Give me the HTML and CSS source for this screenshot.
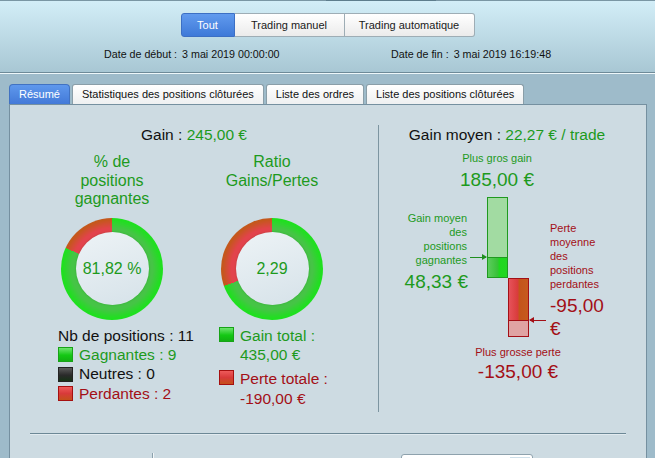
FILE: index.html
```html
<!DOCTYPE html>
<html lang="fr">
<head>
    <meta charset="UTF-8">
    <meta name="viewport" content="width=device-width, initial-scale=1.0">
    <title>Statistiques de trading</title>
    <link rel="stylesheet" href="styles.css">
</head>
<body>
    <div class="header">
        <div class="top-edge"><span></span></div>
        <div class="mode-switch">
            <button class="mode mode-all active">Tout</button>
            <button class="mode mode-manual">Trading manuel</button>
            <button class="mode mode-auto">Trading automatique</button>
        </div>
        <div class="dates">
            <span class="date-start">Date de début :<span class="date-value">3 mai 2019 00:00:00</span></span>
            <span class="date-end">Date de fin :<span class="date-value">3 mai 2019 16:19:48</span></span>
        </div>
    </div>

    <div class="tabs">
        <div class="tab active">Résumé</div>
        <div class="tab">Statistiques des positions clôturées</div>
        <div class="tab">Liste des ordres</div>
        <div class="tab">Liste des positions clôturées</div>
    </div>

    <div class="panel">
        <div class="summary">
            <div class="overview">
                <div class="headline">Gain : <span class="pos">245,00 €</span></div>
                <div class="ratio-cols">
                    <div class="ratio-col">
                        <div class="ratio-title">% de<br>positions<br>gagnantes</div>
                        <div class="donut" style="--split: 294.5deg">
                            <div class="donut-hole">81,82 %</div>
                        </div>
                        <div class="legend">
                            <div class="legend-row">Nb de positions : 11</div>
                            <div class="legend-row pos"><span class="swatch win"></span>Gagnantes : 9</div>
                            <div class="legend-row"><span class="swatch flat"></span>Neutres : 0</div>
                            <div class="legend-row neg"><span class="swatch loss"></span>Perdantes : 2</div>
                        </div>
                    </div>
                    <div class="ratio-col">
                        <div class="ratio-title">Ratio<br>Gains/Pertes</div>
                        <div class="donut" style="--split: 250.6deg">
                            <div class="donut-hole">2,29</div>
                        </div>
                        <div class="legend">
                            <div class="legend-item pos">
                                <span class="swatch win"></span>
                                <div>Gain total :<br>435,00 €</div>
                            </div>
                            <div class="legend-item neg">
                                <span class="swatch loss"></span>
                                <div>Perte totale :<br>-190,00 €</div>
                            </div>
                        </div>
                    </div>
                </div>
            </div>

            <div class="average">
                <div class="headline">Gain moyen : <span class="pos">22,27 € / trade</span></div>
                <div class="avg-chart">
                    <div class="chart-top pos">
                        <div class="note">Plus gros gain</div>
                        <div class="amount">185,00 €</div>
                    </div>

                    <div class="gain-note pos">
                        <div class="note">Gain moyen<br>des<br>positions<br>gagnantes</div>
                        <div class="amount">48,33 €</div>
                    </div>
                    <div class="arrow arrow-gain"></div>

                    <div class="bar bar-gain">
                        <div class="bar-rest"></div>
                        <div class="bar-avg"></div>
                    </div>
                    <div class="bar bar-loss">
                        <div class="bar-avg"></div>
                        <div class="bar-rest"></div>
                    </div>

                    <div class="arrow arrow-loss"></div>
                    <div class="loss-note neg">
                        <div class="note">Perte<br>moyenne<br>des<br>positions<br>perdantes</div>
                        <div class="amount">-95,00<br>€</div>
                    </div>

                    <div class="chart-bottom neg">
                        <div class="note">Plus grosse perte</div>
                        <div class="amount">-135,00 €</div>
                    </div>
                </div>
            </div>
        </div>

        <div class="rule"></div>

        <div class="footer-row">
            <span class="tick"></span>
            <div class="select"><span class="select-button"></span></div>
        </div>
    </div>
</body>
</html>
```

FILE: styles.css
```css
body {
    margin: 0;
    font-family: "Liberation Sans", Arial, sans-serif;
    font-size: 11px;
    color: #111;
    background-color: #9ebbca;
}
.pos {
    color: #1d9a1d;
}
.neg {
    color: #a30f16;
}

/* header with mode switch and dates */
.header {
    height: 72px;
    border-bottom: 1px solid #6e8a98;
    box-shadow: 0 1px 0 #eef7fa;
    background: linear-gradient(#d3eef8, #a8c7d4);
}
.top-edge {
    height: 1px;
    padding-left: 326px;
    background-color: #7a96a4;
}
.top-edge span {
    display: block;
    width: 110px;
    height: 1px;
    background-color: #5e7d8c;
}
.mode-switch {
    display: flex;
    justify-content: center;
    margin-top: 12px;
}
.mode {
    height: 24px;
    padding: 0;
    font-family: inherit;
    font-size: 11px;
    color: #1a1a1a;
    border: 1px solid #9eadb5;
    border-left-width: 0;
    background: linear-gradient(#ffffff, #ebebeb);
}
.mode-all {
    width: 54px;
    border-left-width: 1px;
    border-radius: 3px 0 0 3px;
}
.mode-manual {
    width: 110px;
}
.mode-auto {
    width: 130px;
    border-radius: 0 3px 3px 0;
}
.mode.active {
    color: #fff;
    border-color: #3c6fc4;
    background: linear-gradient(#619aee, #3e79d8);
}
.dates {
    display: flex;
    margin-top: 10px;
    padding-left: 104px;
    font-size: 10.7px;
    line-height: 15px;
}
.date-start {
    width: 287px;
}
.date-value {
    margin-left: 5px;
}

/* tab strip */
.tabs {
    display: flex;
    gap: 2px;
    margin-top: 11px;
    padding-left: 9px;
}
.tab {
    height: 19px;
    line-height: 19px;
    padding: 0 9px;
    border: 1px solid #8a9ea8;
    border-bottom: none;
    border-radius: 3px 3px 0 0;
    background: linear-gradient(#ffffff, #eef0f1);
}
.tab.active {
    color: #fff;
    border-color: #4172c2;
    border-radius: 4px 4px 0 0;
    background: linear-gradient(#5f98ec, #4279d8);
}

.panel {
    margin: 0 8px 0 9px;
    border: 1px solid #7590a0;
    background-color: #cddbe2;
}
.summary {
    display: flex;
    margin-top: 20px;
}
.headline {
    font-size: 15.5px;
    line-height: 18px;
    text-align: center;
}

/* left side: two ring charts */
.overview {
    width: 368px;
    padding-top: 1px;
}
.ratio-cols {
    display: flex;
    gap: 52px;
    margin-top: 9px;
    padding-left: 48px;
}
.ratio-col {
    width: 108px;
}
.ratio-title {
    height: 55.5px;
    font-size: 16px;
    line-height: 18.5px;
    text-align: center;
    color: #1d9a1d;
}
.donut {
    position: relative;
    display: flex;
    align-items: center;
    justify-content: center;
    width: 102px;
    height: 102px;
    margin: 9px auto 0;
    border-radius: 50%;
    background: conic-gradient(#1fe01f 0 var(--split), #c4581c var(--split) 360deg);
}
.donut::before {
    content: "";
    position: absolute;
    inset: 0;
    border-radius: 50%;
    background: conic-gradient(#46c446 0 var(--split), #e2434c var(--split) 360deg);
    -webkit-mask-image: radial-gradient(circle closest-side, #000 80%, transparent 97%);
    mask-image: radial-gradient(circle closest-side, #000 80%, transparent 97%);
}
.donut-hole {
    position: relative;
    display: flex;
    align-items: center;
    justify-content: center;
    width: 73px;
    height: 73px;
    border-radius: 50%;
    font-size: 16px;
    color: #1d9a1d;
    background: linear-gradient(160deg, #edf3f6, #d6e2e9);
    box-shadow: 0 0 2px rgba(0, 60, 0, 0.25);
}
.legend {
    margin-top: 6.5px;
    font-size: 15.5px;
    line-height: 19.2px;
    white-space: nowrap;
}
.legend-row {
    display: flex;
    align-items: center;
}
.legend-item {
    display: flex;
    align-items: flex-start;
    margin-bottom: 5px;
}
.legend-item .swatch {
    margin: 1px 6px 0 1px;
}
.swatch {
    flex-shrink: 0;
    width: 13px;
    height: 13px;
    margin-right: 6px;
    border: 1px solid;
}
.swatch.win {
    border-color: #17a317;
    background: linear-gradient(#6ee46e, #14c814 55%, #12b012);
}
.swatch.flat {
    border-color: #222;
    background: linear-gradient(#5a5a5a, #2a2a2a 55%, #163216);
}
.swatch.loss {
    border-color: #a51010;
    background: linear-gradient(#ee5a5a, #d83a3a 50%, #c4501a);
}

/* right side: average gain / loss bars */
.average {
    width: 256px;
    height: 286px;
    padding-top: 1px;
    border-left: 1px solid #7d95a1;
}
.avg-chart {
    position: relative;
    height: 265px;
    margin-top: 2px;
}
.note {
    font-size: 11px;
    line-height: 14px;
}
.amount {
    font-size: 19px;
    line-height: 22px;
}
.chart-top,
.chart-bottom {
    position: absolute;
    width: 120px;
    text-align: center;
}
.chart-top {
    left: 58px;
    top: 5px;
}
.chart-top .amount {
    margin-top: 4px;
}
.chart-bottom {
    left: 79px;
    top: 199px;
}
.chart-bottom .amount {
    margin-top: 2px;
}
.gain-note {
    position: absolute;
    left: 8px;
    top: 65px;
    width: 80px;
    text-align: right;
}
.gain-note .amount {
    margin-top: 4px;
    margin-right: -1px;
}
.loss-note {
    position: absolute;
    left: 171px;
    top: 75px;
    width: 70px;
}
.loss-note .amount {
    margin-top: 2.5px;
    line-height: 23px;
}
.bar {
    position: absolute;
    display: flex;
    flex-direction: column;
    width: 19px;
    border: 1px solid;
}
.bar-gain {
    left: 108px;
    top: 51px;
    height: 79px;
    border-color: #1f9a1f;
}
.bar-gain .bar-rest {
    flex: 1;
    background-color: #a2dba2;
}
.bar-gain .bar-avg {
    height: 19px;
    border-top: 1px solid #1f9a1f;
    background: linear-gradient(90deg, #5ccc5c, #38c238 50%, #1ed81e 60%, #22d622);
}
.bar-loss {
    left: 129px;
    top: 132px;
    height: 57px;
    border-color: #a30f16;
}
.bar-loss .bar-avg {
    height: 41px;
    background: linear-gradient(90deg, #e6525a, #d93c3c 45%, #c4541a 55%, #c65a1e);
}
.bar-loss .bar-rest {
    flex: 1;
    border-top: 1px solid #a30f16;
    background-color: #e0a3a3;
}
.arrow {
    position: absolute;
    width: 16px;
    height: 1px;
}
.arrow-gain {
    left: 91px;
    top: 111px;
    background-color: #1f8f1f;
}
.arrow-gain::after {
    content: "";
    position: absolute;
    right: -1px;
    top: -3px;
    border-left: 5px solid #1f8f1f;
    border-top: 3.5px solid transparent;
    border-bottom: 3.5px solid transparent;
}
.arrow-loss {
    left: 151px;
    top: 174px;
    background-color: #a30f16;
}
.arrow-loss::before {
    content: "";
    position: absolute;
    left: -1px;
    top: -3px;
    border-right: 5px solid #a30f16;
    border-top: 3.5px solid transparent;
    border-bottom: 3.5px solid transparent;
}

/* lower section */
.rule {
    height: 1px;
    margin: 20px 20px 0;
    background-color: #6c8896;
    box-shadow: 0 1px 0 #e2ebf0;
}
.footer-row {
    display: flex;
    align-items: flex-start;
    padding: 19px 0 30px 142px;
}
.tick {
    width: 1px;
    height: 8px;
    background-color: #8aa0ac;
    box-shadow: 1px 0 0 #f2f6f8;
}
.select {
    display: flex;
    justify-content: flex-end;
    width: 130px;
    height: 22px;
    margin: 1px 0 0 248px;
    border: 1px solid #8ea2ad;
    border-radius: 3px;
    background-color: #fff;
}
.select-button {
    width: 20px;
    margin: 2px 2px 0 0;
    background-color: #cfe0ea;
}
```
